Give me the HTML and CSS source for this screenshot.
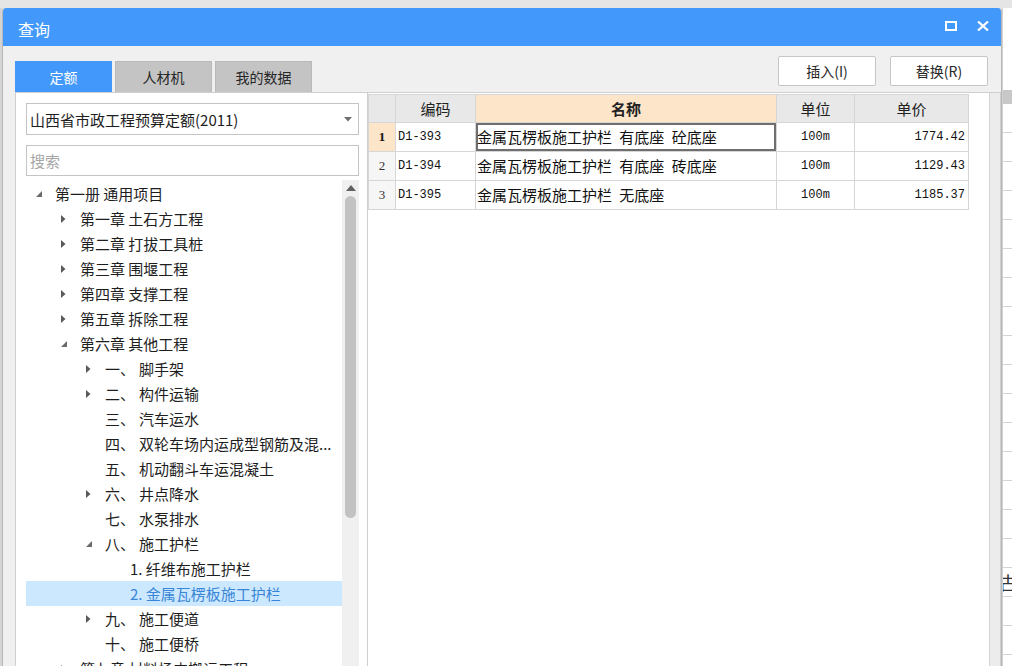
FILE: index.html
```html
<!DOCTYPE html>
<html lang="zh-CN">
<head>
<meta charset="utf-8">
<title>查询</title>
<link rel="stylesheet" href="styles.css">
</head>
<body>
<div class="desk">
  <div class="edge-left"></div>
  <div class="dialog">
    <div class="titlebar">
      <span class="title">查询</span>
      <div class="win-btns">
        <svg width="12" height="10" viewBox="0 0 12 10"><rect x="1" y="1" width="10" height="8" fill="none" stroke="#fff" stroke-width="2"/></svg>
        <svg width="12" height="10" viewBox="0 0 12 10"><path d="M1 0.5 L11 9.5 M11 0.5 L1 9.5" stroke="#fff" stroke-width="2.2"/></svg>
      </div>
    </div>
    <div class="body">
      <div class="toolbar">
        <div class="tabs">
          <div class="tab active">定额</div>
          <div class="tab">人材机</div>
          <div class="tab">我的数据</div>
        </div>
        <div class="actions">
          <button class="btn">插入(I)</button>
          <button class="btn">替换(R)</button>
        </div>
      </div>
      <div class="content">
        <div class="left">
          <div class="select">
            <span>山西省市政工程预算定额(2011)</span>
            <svg width="8" height="5" viewBox="0 0 8 5"><polygon points="0,0 8,0 4,4.5" fill="#707070"/></svg>
          </div>
          <div class="search">搜索</div>
          <div class="tree">
            <ul class="tree-list">
              <li class="node l0"><span class="arr"><svg width="6" height="6" viewBox="0 0 6 6"><polygon points="6,0 6,6 0,6" fill="#6a6a6a"/></svg></span>第一册 通用项目</li>
              <li class="node l1"><span class="arr"><svg width="5" height="8" viewBox="0 0 5 8"><polygon points="0,0 4.5,4 0,8" fill="#5a5a5a"/></svg></span>第一章 土石方工程</li>
              <li class="node l1"><span class="arr"><svg width="5" height="8" viewBox="0 0 5 8"><polygon points="0,0 4.5,4 0,8" fill="#5a5a5a"/></svg></span>第二章 打拔工具桩</li>
              <li class="node l1"><span class="arr"><svg width="5" height="8" viewBox="0 0 5 8"><polygon points="0,0 4.5,4 0,8" fill="#5a5a5a"/></svg></span>第三章 围堰工程</li>
              <li class="node l1"><span class="arr"><svg width="5" height="8" viewBox="0 0 5 8"><polygon points="0,0 4.5,4 0,8" fill="#5a5a5a"/></svg></span>第四章 支撑工程</li>
              <li class="node l1"><span class="arr"><svg width="5" height="8" viewBox="0 0 5 8"><polygon points="0,0 4.5,4 0,8" fill="#5a5a5a"/></svg></span>第五章 拆除工程</li>
              <li class="node l1"><span class="arr"><svg width="6" height="6" viewBox="0 0 6 6"><polygon points="6,0 6,6 0,6" fill="#6a6a6a"/></svg></span>第六章 其他工程</li>
              <li class="node l2"><span class="arr"><svg width="5" height="8" viewBox="0 0 5 8"><polygon points="0,0 4.5,4 0,8" fill="#5a5a5a"/></svg></span><span class="num">一、</span>脚手架</li>
              <li class="node l2"><span class="arr"><svg width="5" height="8" viewBox="0 0 5 8"><polygon points="0,0 4.5,4 0,8" fill="#5a5a5a"/></svg></span><span class="num">二、</span>构件运输</li>
              <li class="node l2"><span class="arr"></span><span class="num">三、</span>汽车运水</li>
              <li class="node l2"><span class="arr"></span><span class="num">四、</span>双轮车场内运成型钢筋及混...</li>
              <li class="node l2"><span class="arr"></span><span class="num">五、</span>机动翻斗车运混凝土</li>
              <li class="node l2"><span class="arr"><svg width="5" height="8" viewBox="0 0 5 8"><polygon points="0,0 4.5,4 0,8" fill="#5a5a5a"/></svg></span><span class="num">六、</span>井点降水</li>
              <li class="node l2"><span class="arr"></span><span class="num">七、</span>水泵排水</li>
              <li class="node l2"><span class="arr"><svg width="6" height="6" viewBox="0 0 6 6"><polygon points="6,0 6,6 0,6" fill="#6a6a6a"/></svg></span><span class="num">八、</span>施工护栏</li>
              <li class="node l3"><span class="arr"></span>1. 纤维布施工护栏</li>
              <li class="node l3 selected"><span class="arr"></span>2. 金属瓦楞板施工护栏</li>
              <li class="node l2"><span class="arr"><svg width="5" height="8" viewBox="0 0 5 8"><polygon points="0,0 4.5,4 0,8" fill="#5a5a5a"/></svg></span><span class="num">九、</span>施工便道</li>
              <li class="node l2"><span class="arr"></span><span class="num">十、</span>施工便桥</li>
              <li class="node l1"><span class="arr"><svg width="5" height="8" viewBox="0 0 5 8"><polygon points="0,0 4.5,4 0,8" fill="#5a5a5a"/></svg></span>第七章 材料场内搬运工程</li>
            </ul>
            <div class="vscroll">
              <div class="sb-btn"><svg width="10" height="6" viewBox="0 0 10 6"><polygon points="0,6 10,6 5,0" fill="#606060"/></svg></div>
              <div class="sb-track"><div class="sb-thumb"></div></div>
              <div class="sb-btn down"><svg width="10" height="6" viewBox="0 0 10 6"><polygon points="0,0 10,0 5,6" fill="#606060"/></svg></div>
            </div>
          </div>
        </div>
        <div class="right">
          <div class="grid-area">
            <table class="grid">
              <colgroup>
                <col class="c-rh"><col class="c-code"><col class="c-name"><col class="c-unit"><col class="c-price">
              </colgroup>
              <thead>
                <tr>
                  <th class="rh"></th>
                  <th>编码</th>
                  <th class="hl">名称</th>
                  <th>单位</th>
                  <th>单价</th>
                </tr>
              </thead>
              <tbody>
                <tr class="cur">
                  <td class="rh active">1</td>
                  <td class="code first">D1-393</td>
                  <td class="name focus">金属瓦楞板施工护栏 有底座 砼底座</td>
                  <td class="unit">100m</td>
                  <td class="price">1774.42</td>
                </tr>
                <tr>
                  <td class="rh">2</td>
                  <td class="code">D1-394</td>
                  <td class="name">金属瓦楞板施工护栏 有底座 砖底座</td>
                  <td class="unit">100m</td>
                  <td class="price">1129.43</td>
                </tr>
                <tr>
                  <td class="rh">3</td>
                  <td class="code">D1-395</td>
                  <td class="name">金属瓦楞板施工护栏 无底座</td>
                  <td class="unit">100m</td>
                  <td class="price">1185.37</td>
                </tr>
              </tbody>
            </table>
            <div class="grid-fill"></div>
            <div class="splitter">
              <div class="handle"><svg width="8" height="5" viewBox="0 0 8 5"><polygon points="0,5 8,5 4,0" fill="#fff"/></svg></div>
            </div>
          </div>
          <div class="side-strip"></div>
        </div>
      </div>
    </div>
  </div>
  <div class="edge-right">
    <div class="er-head"></div>
    <div class="er-rows">
      <div class="er-row"></div><div class="er-row"></div><div class="er-row"></div><div class="er-row"></div>
      <div class="er-row"></div><div class="er-row"></div><div class="er-row"></div><div class="er-row"></div>
      <div class="er-row"></div><div class="er-row"></div><div class="er-row"></div><div class="er-row"></div>
      <div class="er-row"></div><div class="er-row"></div><div class="er-row"></div><div class="er-row"></div>
      <div class="er-row txt">古</div><div class="er-row"></div><div class="er-row"></div>
    </div>
  </div>
</div>
</body>
</html>
```
FILE: styles.css
```css
* { box-sizing: border-box; }
html, body { margin: 0; padding: 0; }
body {
  width: 1012px;
  height: 666px;
  overflow: hidden;
  background: #e5e5e5;
  font-family: "Noto Sans CJK SC", "Noto Sans", sans-serif;
  color: #1e1e1e;
}
.desk {
  display: flex;
  padding-top: 8px;
  height: 666px;
}
.edge-left {
  width: 2px;
  background: #d4d4d4;
}
.dialog {
  width: 1000px;
  height: 658px;
  border: 1px solid #b8b8b8;
  border-top: none;
  border-bottom: none;
  border-radius: 4px 4px 0 0;
  background: #f0f0f0;
  display: flex;
  flex-direction: column;
  overflow: hidden;
}
.titlebar {
  height: 38px;
  flex: none;
  background: #4399fb;
  display: flex;
  align-items: center;
  justify-content: space-between;
  padding: 3px 12px 0 15px;
}
.title {
  color: #fff;
  font-size: 16px;
  line-height: 20px;
}
.win-btns {
  display: flex;
  gap: 20px;
  margin-top: -5px;
}
.win-btns svg { display: block; }
.body {
  flex: 1;
  display: flex;
  flex-direction: column;
  padding: 0 0 2px 12px;
}
.toolbar {
  height: 46px;
  flex: none;
  display: flex;
  align-items: flex-end;
  justify-content: space-between;
}
.tabs {
  display: flex;
  gap: 3px;
}
.tab {
  width: 97px;
  height: 31px;
  background: #c4c4c4;
  border: 1px solid #b9b9b9;
  border-bottom: none;
  font-size: 14px;
  line-height: 30px;
  text-align: center;
  color: #262626;
}
.tab.active {
  background: #4399fb;
  border-color: #4399fb;
  color: #fff;
}
.actions {
  display: flex;
  gap: 14px;
  margin: 0 13px 6px 0;
}
.btn {
  width: 98px;
  height: 30px;
  background: #fff;
  border: 1px solid #c6c6c6;
  border-radius: 2px;
  font-family: "Noto Sans CJK SC", "Noto Sans", sans-serif;
  font-size: 14px;
  color: #262626;
  padding: 0;
}
.content {
  flex: 1;
  display: flex;
  border: 1px solid #cfcfcf;
  background: #fff;
  min-height: 0;
}
.left {
  width: 352px;
  flex: none;
  border-right: 1px solid #cfcfcf;
  padding: 10px 8px 0 10px;
  display: flex;
  flex-direction: column;
  min-height: 0;
}
.select {
  height: 32px;
  border: 1px solid #c4c4c4;
  display: flex;
  align-items: center;
  justify-content: space-between;
  padding: 0 6px 0 3px;
  font-size: 15px;
  color: #1e1e1e;
}
.select svg { display: block; }
.search {
  height: 31px;
  margin-top: 10px;
  border: 1px solid #c4c4c4;
  padding-left: 3px;
  font-size: 15px;
  line-height: 29px;
  color: #a6a6a6;
}
.tree {
  flex: 1;
  margin-top: 4px;
  display: flex;
  min-height: 0;
  overflow: hidden;
}
.tree-list {
  flex: 1;
  list-style: none;
  margin: 0;
  padding: 1px 0 0 0;
  overflow: hidden;
}
.node {
  height: 25px;
  display: flex;
  align-items: center;
  font-size: 15px;
  white-space: nowrap;
  color: #1e1e1e;
}
.node.l1 { padding-left: 25px; }
.node.l2 { padding-left: 50px; }
.node.l3 { padding-left: 75px; }
.node.selected {
  background: #cce8ff;
  color: #3a86d6;
}
.arr {
  width: 29px;
  flex: none;
  display: flex;
  align-items: center;
  padding-left: 10px;
}
.arr svg { display: block; }
.num {
  width: 34px;
  flex: none;
}
.vscroll {
  width: 17px;
  flex: none;
  background: #f0f0f0;
  display: flex;
  flex-direction: column;
}
.sb-btn {
  height: 16px;
  flex: none;
  display: flex;
  align-items: center;
  justify-content: center;
}
.sb-btn.down { height: 20px; }
.sb-track {
  flex: 1;
  padding: 0 3px;
}
.sb-thumb {
  height: 322px;
  background: #c2c2c2;
  border-radius: 6px;
}
.right {
  flex: 1;
  display: flex;
  min-width: 0;
}
.grid-area {
  flex: 1;
  display: flex;
  flex-direction: column;
  background: #fff;
  border-right: 1px solid #d4d4d4;
  padding-top: 1px;
}
.grid {
  border-collapse: collapse;
  table-layout: fixed;
  width: 600px;
  font-size: 15px;
}
.c-rh { width: 27px; }
.c-code { width: 80px; }
.c-name { width: 301px; }
.c-unit { width: 78px; }
.c-price { width: 114px; }
.grid th, .grid td {
  border: 1px solid #d6d6d6;
  padding: 0;
  white-space: nowrap;
  overflow: hidden;
}
.grid th {
  height: 28px;
  background: #e8e8e8;
  font-weight: normal;
  color: #222;
  text-align: center;
  line-height: 20px;
}
.grid th.hl {
  background: #fde5c9;
  font-weight: bold;
}
.grid td {
  height: 29px;
  color: #111;
  line-height: 20px;
}
.grid td.rh {
  background: #f6f6f6;
  text-align: center;
  font-family: "Liberation Serif", serif;
  font-size: 13px;
  color: #333;
}
.grid td.rh.active {
  background: #fde5c9;
  font-weight: bold;
  color: #111;
}
.grid td.code {
  font-family: "Liberation Mono", monospace;
  font-size: 12px;
  padding-left: 2px;
}
.grid td.code.first {
  border-left: 1px solid #5ea6f4;
}
.grid tr.cur td {
  border-top: 1px solid #8fc0f4;
}
.grid td.name {
  padding-left: 1px;
  word-spacing: 4px;
}
.grid td.name.focus {
  box-shadow: inset 0 0 0 2px #6f6f6f;
}
.grid td.unit {
  font-family: "Liberation Mono", monospace;
  font-size: 12px;
  text-align: center;
}
.grid td.price {
  font-family: "Liberation Mono", monospace;
  font-size: 12px;
  text-align: right;
  padding-right: 3px;
}
.grid-fill { flex: 1; }
.splitter {
  height: 6px;
  flex: none;
  background: #c4c4c4;
  display: flex;
  justify-content: center;
}
.handle {
  width: 61px;
  height: 6px;
  background: #4399fb;
  display: flex;
  align-items: flex-end;
  justify-content: center;
}
.handle svg { display: block; }
.side-strip {
  width: 10px;
  flex: none;
  background: #ececec;
}
.edge-right {
  width: 10px;
  flex: none;
  background: #fff;
  display: flex;
  flex-direction: column;
  border-left: 1px solid #d0d0d0;
}
.er-head {
  height: 14px;
  margin-top: 82px;
  background: #c8c8c8;
}
.er-rows {
  display: flex;
  flex-direction: column;
}
.er-row {
  height: 29px;
  border-bottom: 1px solid #d4d4d4;
  font-size: 18px;
  line-height: 28px;
  overflow: hidden;
  color: #333;
}
.er-row.txt { text-indent: -4px; }
```
